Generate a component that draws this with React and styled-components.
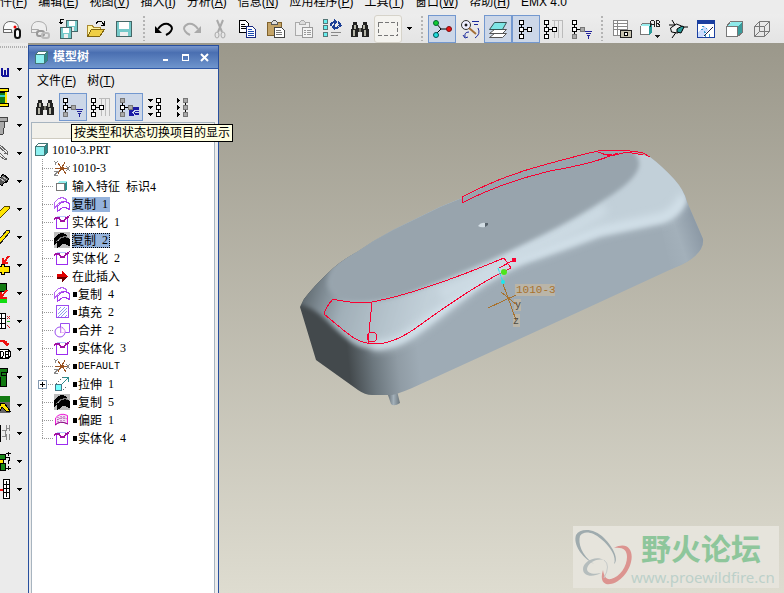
import { Fragment } from "react";
import styled, { createGlobalStyle, css } from "styled-components";

const GlobalStyle = createGlobalStyle`
    * {
        box-sizing: border-box;
    }

    body {
        margin: 0;
        overflow: hidden;
        background: #ececec;
        color: #000;
        font-family: "Liberation Sans", "Noto Sans CJK SC", sans-serif;
        font-size: 12px;
    }

    button {
        padding: 0;
        border: 0;
        background: none;
        color: inherit;
        font: inherit;
    }

    svg {
        display: block;
        flex: none;
    }
`;

const Page = styled.div`
    display: flex;
    flex-direction: column;
    height: 100vh;
    overflow: hidden;
`;

const MenuBar = styled.nav`
    display: flex;
    flex: none;
    align-items: flex-end;
    gap: 11px;
    height: 14px;
    padding-bottom: 4px;
    margin-left: -12px;
    overflow: hidden;
`;

const MenuItem = styled.button`
    flex: none;
    line-height: 16px;
    white-space: nowrap;
`;

const ToolBar = styled.div`
    display: flex;
    flex: none;
    align-items: center;
    height: 29px;
    margin-left: -2px;
    background: linear-gradient(#ededed, #e4e4e4);
`;

const ToolButton = styled.button`
    display: flex;
    flex: none;
    align-items: center;
    justify-content: center;
    width: 28px;
    height: 28px;

    ${(p) => p.$pressed && css`
        border: 1px solid #7398cf;
        background: #ccd7e8;
    `}

    ${(p) => p.$soft && css`
        border: 1px solid #d6d3ca;
        border-radius: 3px;
        background: #f4f3ef;
    `}
`;

const Grip = styled.span`
    flex: none;
    width: 12px;
    height: 25px;
    background: repeating-linear-gradient(#b4b4b4 0 2px, transparent 2px 4px) center / 2px 100% no-repeat;
`;

const DropButton = styled.button`
    display: flex;
    flex: none;
    align-items: center;
    justify-content: center;
    width: 14px;
    height: 28px;
`;

const Main = styled.main`
    display: flex;
    flex: 1;
    min-height: 0;
    background: #9b988b;
`;

const Dock = styled.aside`
    flex: none;
    width: 28px;
    padding-top: 12px;
    overflow: hidden;
    background: repeating-linear-gradient(90deg, #b0b0b0 0 1px, transparent 1px 2px) 0 3px / 100% 2px no-repeat #ebebeb;
`;

const DockRow = styled.div`
    display: flex;
    align-items: center;
    height: 28px;
    margin-left: -12px;
`;

const DockTool = styled.button`
    width: 24px;
    height: 24px;
`;

const Panel = styled.section`
    position: relative;
    display: flex;
    flex: none;
    flex-direction: column;
    width: 191px;
    margin-top: 2px;
    border: 1px solid #284f9e;
    border-bottom: 0;
    background: #ececec;
`;

const TitleBar = styled.header`
    display: flex;
    align-items: center;
    height: 23px;
    padding: 0 4px 0 5px;
    border-bottom: 1px solid #2f58a5;
    background: linear-gradient(#7896cc, #4a6fb1 30%, #6f95cd);
    color: #fff;
`;

const Title = styled.h1`
    flex: 1;
    margin: 0 0 0 4px;
    font-size: 12px;
    line-height: 20px;
`;

const WindowButton = styled.button`
    display: flex;
    align-items: center;
    justify-content: center;
    width: 19px;
    height: 19px;
`;

const PanelMenu = styled.nav`
    display: flex;
    gap: 11px;
    align-items: center;
    height: 23px;
    padding-left: 8px;
`;

const PanelTools = styled.div`
    display: flex;
    height: 30px;
    padding-left: 2px;
    padding-top: 1px;
`;

const TreeBox = styled.div`
    flex: 1;
    margin: 0 3px 0 2px;
    border: 1px solid #a7b4bf;
    border-bottom: 0;
    background: #fff;
`;

const TreeHead = styled.div`
    height: 16px;
    border-bottom: 1px solid #cfccc0;
    background: #f1f0ea;
`;

const Tree = styled.ul`
    margin: 0;
    padding: 2px 0 0;
    list-style: none;
`;

const Row = styled.li`
    display: flex;
    align-items: center;
    height: 18px;
    padding-left: ${(p) => (p.$root ? 2 : 10)}px;
`;

const Branch = styled.span`
    display: flex;
    align-items: center;
    width: 12px;
    height: 18px;
    background:
        repeating-linear-gradient(#999 0 1px, transparent 1px 2px) 0 0 / 1px ${(p) => (p.$last ? 10 : 18)}px no-repeat,
        repeating-linear-gradient(90deg, #999 0 1px, transparent 1px 2px) 0 9px / 100% 1px no-repeat;
`;

const Expander = styled.button`
    flex: none;
    width: 9px;
    height: 9px;
    margin-left: -4px;
    border: 1px solid #8399b1;
    background:
        linear-gradient(#000, #000) center / 5px 1px no-repeat,
        linear-gradient(#000, #000) center / 1px 5px no-repeat,
        #fff;
`;

const Label = styled.span`
    display: flex;
    align-items: center;
    height: 15px;
    margin-left: 2px;
    padding-right: 2px;
    white-space: pre;
    font-family: "Liberation Serif", "Noto Sans CJK SC", serif;

    ${(p) => p.$code && css`
        font-family: "Liberation Mono", monospace;
        font-size: 10px;
    `}

    ${(p) => p.$marked && css`
        &::before {
            content: "";
            width: 4px;
            height: 5px;
            margin: 0 1px;
            background: #000;
        }
    `}

    ${(p) => p.$selected && css`
        background: #95b3dc;
    `}

    ${(p) => p.$focused && css`
        outline: 1px dotted #000;
        outline-offset: -1px;
    `}
`;

const Count = styled.span`
    margin-left: 3px;
`;

const Tooltip = styled.div`
    position: absolute;
    top: 78px;
    left: 42px;
    z-index: 2;
    padding: 0 2px;
    border: 1px solid #000;
    background: #ffffe1;
    line-height: 16px;
    white-space: nowrap;
`;

const Canvas = styled.section`
    position: relative;
    flex: 1;
    overflow: hidden;
    background: linear-gradient(#9b988b, #dedcd0);
`;

const Watermark = styled.div`
    position: absolute;
    right: 5px;
    bottom: 5px;
    display: flex;
    align-items: center;
    width: 206px;
    height: 62px;
    background: #e6e4dc;
`;

const SiteText = styled.div`
    display: flex;
    flex-direction: column;
    margin-left: -2px;
`;

const SiteName = styled.strong`
    margin-left: 10px;
    color: #8ec69b;
    font-family: "Noto Sans CJK SC", sans-serif;
    font-size: 30px;
    font-weight: 700;
    line-height: 40px;
`;

const SiteUrl = styled.a`
    color: #bcd0c9;
    font-family: "Noto Sans", sans-serif;
    font-size: 15px;
    line-height: 20px;
    text-decoration: none;
`;

/* ---------- icons ---------- */

const Icon = ({ size = 20, smooth, children }) => (
    <svg
        width={size}
        height={size}
        viewBox={`0 0 ${size} ${size}`}
        fill="none"
        stroke="#000"
        shapeRendering={smooth ? "auto" : "crispEdges"}
        aria-hidden="true"
    >
        {children}
    </svg>
);

const Caret = () => (
    <svg width="5" height="3" viewBox="0 0 5 3" shapeRendering="crispEdges" aria-hidden="true">
        <path d="M0 0h5v1H0zM1 1h3v1H1zM2 2h1v1H2z" />
    </svg>
);

// square nodes joined by a line, shared by all of the tree icons
const Nodes = ({ x = 2, grey = [], side = true, line = "#000" }) => (
    <g>
        <path d={`M${x + 2.5} 3v14${side ? "M" + (x + 3) + " 10.5h8" : ""}`} stroke={line} />
        {[1, 8, 15].map((y, i) => (
            <rect
                key={y}
                x={x + 0.5}
                y={y + 0.5}
                width="4"
                height="4"
                fill={grey.includes(i) ? "#aaa" : "#fff"}
                stroke={grey.includes(i) ? "#777" : "#000"}
            />
        ))}
        {side && (
            <rect
                x={x + 8.5}
                y="8.5"
                width="4"
                height="4"
                fill={grey.includes(3) ? "#aaa" : "#fff"}
                stroke={grey.includes(3) ? "#777" : "#000"}
            />
        )}
    </g>
);

const Binoculars = () => (
    <Icon>
        <path d="M3 3h4v3h1v3h4V6h1V3h4v3h1v4h1v8h-7v-5H8v5H1v-8h1V6h1z" fill="#222" stroke="none" />
        <path d="M4 6h2v4H4zM3 11h2v6H3zM13 6h2v4h-2zM14 11h2v6h-2z" fill="#b5b5a8" stroke="none" />
        <path d="M9 9h2v4H9z" fill="#77776c" stroke="none" />
    </Icon>
);

const NodesFunnel = () => (
    <Icon>
        <g transform="translate(-2 0)"><Nodes grey={[2, 3]} /></g>
        <path d="M13 12.500h7M14 14.500h5M15 16.500h3M16.500 16v4" stroke="#22229a" />
    </Icon>
);

const NodesColumns = () => (
    <Icon>
        <path d="M8 1.500h11M10.500 2v17M14.500 2v17M18.500 2v17" stroke="#bbb" />
        <g transform="translate(-2 0)"><Nodes /></g>
    </Icon>
);

const NodesOnly = () => (
    <Icon><Nodes x={3} /></Icon>
);

const NodesLayer = () => (
    <Icon>
        <path d="M10 10h10v9H10z" fill="#1b1ba4" stroke="none" />
        <g transform="translate(-1 0)"><Nodes grey={[0, 2, 3]} /></g>
        <path d="M20 13.500h-4l-2 2 2 3h4M16 15.500h4" stroke="#cdd8ee" />
    </Icon>
);

const NodesExpand = () => (
    <Icon>
        <path d="M1 2h5v1H1zM2 3h3v1H2zM3 4h1v1H3zM1 9h5v1H1zM2 10h3v1H2zM3 11h1v1H3zM1 16h5v1H1zM2 17h3v1H2zM3 18h1v1H3z" fill="#000" stroke="none" />
        <Nodes x={9} side={false} />
    </Icon>
);

const NodesCollapse = () => (
    <Icon>
        <path d="M2 1v5l3-2.500zM2 8v5l3-2.500zM2 15v5l3-2.500z" fill="#000" stroke="none" />
        <Nodes x={8} grey={[0, 1, 2]} side={false} />
    </Icon>
);

const SessionA = () => (
    <Icon smooth>
        <path d="M1.500 13.500V8Q3 2 9 2.500Q16 3 16.500 9M1.500 10.500h8v3h-8M1.500 13.500h9" fill="#fafafa" stroke="#666" />
        <circle cx="13" cy="8" r="1.500" fill="#e00" stroke="none" />
        <rect x="13" y="10" width="5" height="9" rx="2.500" fill="#fff" stroke="#111" strokeWidth="2" />
    </Icon>
);

const SessionB = () => (
    <Icon smooth>
        <path d="M1.500 14V8Q3 2 9 2.500Q16 3 16.500 9v3M1.500 10.500h7v3h-7" fill="#eee" stroke="#aaa" />
        <rect x="7" y="12" width="7" height="5" rx="2" stroke="#999" strokeWidth="2" />
        <rect x="12" y="14" width="7" height="5" rx="2" stroke="#bbb" strokeWidth="2" />
    </Icon>
);

const Disk = ({ x = 0, y = 0, w = 14 }) => (
    <g transform={`translate(${x} ${y})`}>
        <path d={`M.5.5h${w}v${w}h-${w}z`} fill="#75c9c9" stroke="#466" />
        <path d={`M3 1h${w - 5}v${w / 2 - 1}H3z`} fill="#fff" stroke="none" />
        <path d={`M4 ${w - 4}h${w - 7}v4H4z`} fill="#eee" stroke="none" />
    </g>
);

const SaveAll = () => (
    <Icon>
        <Disk x={8} y={1} w={11} />
        <Disk x={2} y={8} w={11} />
        <path d="M6 .5H2.500V5M.5 3.500h4M1.500 4.500h2" />
    </Icon>
);

const OpenFolder = () => (
    <Icon>
        <path d="M1.500 17V6.500h5l1 2h7V11" fill="#fff3a0" stroke="#aa8a30" />
        <path d="M1.500 17.500l4-7h13l-5 7z" fill="#f0cf45" stroke="#806510" />
        <path d="M10 4.500q4-5 8 1M18.500 2v4h-4" />
    </Icon>
);

const Save = () => (
    <Icon><Disk x={2} y={2} w={15} /></Icon>
);

const Undo = () => (
    <Icon smooth>
        <path d="M4 10Q8 4 14 5Q20 8 17 12Q16 14 12 16" strokeWidth="2" />
        <path d="M1 7v7h7z" fill="#000" stroke="none" />
    </Icon>
);

const Redo = () => (
    <Icon smooth>
        <path d="M16 10Q12 4 6 5Q0 8 3 12Q4 14 8 16" stroke="#aaa" strokeWidth="2" />
        <path d="M19 7v7h-7z" fill="#aaa" stroke="none" />
    </Icon>
);

const Cut = () => (
    <Icon smooth>
        <path d="M7 1l5 12M13 1L8 13" stroke="#aaa" strokeWidth="2" />
        <ellipse cx="7" cy="16" rx="2" ry="3" stroke="#aaa" />
        <ellipse cx="13" cy="16" rx="2" ry="3" stroke="#aaa" />
    </Icon>
);

const Copy = () => (
    <Icon>
        <path d="M1.500 1.500h6l3 3v9h-9z" fill="#fff" />
        <path d="M3 5.500h4M3 7.500h6M3 9.500h5" />
        <path d="M8.500 7.500h6l3 3v8h-9z" fill="#fff" stroke="#1a2a80" />
        <path d="M10 10.500h4M10 12.500h6M10 14.500h6M10 16.500h6" stroke="#1a4ab0" />
    </Icon>
);

const Paste = () => (
    <Icon>
        <path d="M1.500 3.500h14v13h-14z" fill="#c4a468" stroke="#80622c" />
        <path d="M5.500 5.500v-2l2-2h2l2 2v2z" fill="#ddd" stroke="#555" />
        <path d="M8.500 8.500h7l3 3v7h-10z" fill="#fff" stroke="#444" />
        <path d="M10 11.500h5M10 13.500h6M10 15.500h6" stroke="#777" />
    </Icon>
);

const PasteSpecial = () => (
    <Icon>
        <path d="M1.500 3.500h14v13h-14z" fill="#eee" stroke="#aaa" />
        <path d="M5.500 5.500v-2l2-2h2l2 2v2z" fill="#ddd" stroke="#aaa" />
        <path d="M8.500 8.500h10v10h-10z" fill="#f4f4f4" stroke="#999" />
        <path d="M10 11.500h2M13 11.500h4M10 13.500h2M13 13.500h4M10 15.500h2M13 15.500h4" stroke="#999" />
    </Icon>
);

const Regenerate = () => (
    <Icon>
        {[1, 7, 14].map((y) => (
            <rect key={y} x="1.500" y={y - 0.5} width="4" height="4" fill="#6ee" stroke="#577" />
        ))}
        <path d="M9 7q0-4 4-4M16 3q3 1 2 4M12 8q2 2 4 0" stroke="#1c3f96" strokeWidth="2" />
        <path d="M12 0l4 3-4 3zM16 6h4l-2 3zM13 5v6l-4-3z" fill="#1c3f96" stroke="none" />
        <path d="M9 13.500h10M9 16.500h7" stroke="#888" />
    </Icon>
);

const SelectBox = () => (
    <Icon><path d="M.5 3.500h19v13H.5z" stroke="#777" strokeDasharray="4 2" /></Icon>
);

const SpinCenter = () => (
    <Icon smooth>
        <path d="M4 4l5 6L4 15M9 10h8" />
        <circle cx="4" cy="4" r="2.500" fill="#1c3" stroke="#063" />
        <circle cx="4" cy="16" r="2.500" fill="#2dd" stroke="#055" />
        <circle cx="17" cy="10" r="2.500" fill="#e11" stroke="#711" />
    </Icon>
);

const OrientMode = () => (
    <Icon smooth>
        <circle cx="6" cy="6" r="4.500" fill="#eef" stroke="#333" />
        <circle cx="6" cy="6" r="1" fill="#333" />
        <path d="M9 9l7 6" stroke="#a5703a" strokeWidth="2" />
        <path d="M12 2.500h7M14 5.500h4M9 13q-5 0-4 5M3 16l2 3 3-1M18 9q3 6-3 10" stroke="#1b2a9c" />
    </Icon>
);

const Layers = () => (
    <Icon smooth>
        <path d="M1.500 18.500l5-4h12l-4 4zM1.500 14.500l5-4h12l-4 4z" fill="#fff" stroke="#555" />
        <path d="M1.500 10.500l5-7h12l-4 7z" fill="#7ee6e6" stroke="#355" />
    </Icon>
);

const ViewSnapshot = () => (
    <Icon>
        <path d="M1.500 1.500h14v15h-14zM1 4.500h14M1 7.500h14M1 10.500h14M5.500 2v14" fill="#fff" stroke="#888" />
        <path d="M8.500 11.500h11v7h-11z" fill="#c8c4b0" stroke="#222" />
        <circle cx="14" cy="15" r="2" fill="#fff" />
    </Icon>
);

const SavedViews = () => (
    <Icon>
        <path d="M.5 7.500l2-3h9v9l-2 2h-9z" fill="#fff" stroke="#777" />
        <path d="M2 5h9l-2 2H1z" fill="#9ee" stroke="none" />
        <path d="M9 7l3-2v9l-3 2z" fill="#2a9a9a" stroke="none" />
        <path d="M10.500 8V2.500l1-1h2l1 1V8M11 5.500h3M16.500 8V1.500h2l1 1v1l-1 1h-2M18 4.500l1 1v2h-3" stroke="#222" />
        <path d="M15 16h5v1h-5zM16 17h3v1h-3zM17 18h1v1h-1z" fill="#222" stroke="none" />
    </Icon>
);

const Datum = () => (
    <Icon smooth>
        <path d="M4 1l3 5M1 6h8M14 8h6M4 19l5-7" />
        <path d="M2.500 9l6-4 5 2 1 4-5 3-6-1z" fill="#eee" />
        <path d="M9 10l5-3 2 1-3 6-4-1z" fill="#2a9a9a" />
    </Icon>
);

const Sketch = () => (
    <Icon>
        <path d="M1.500 1.500h17v17h-17z" fill="#fff" stroke="#1b3fa0" />
        <path d="M1 1h18v4H1z" fill="#1b3fa0" stroke="none" />
        <path d="M2 14l6-7 4 4-5 7H2z" fill="#cdf" stroke="none" />
        <path d="M6 7q8 3 8 11M5 10q5 2 5 8" stroke="#39c" strokeDasharray="2 2" />
        <path d="M17 8l-9 9" stroke="#224" />
    </Icon>
);

const Shaded = () => (
    <Icon>
        <path d="M2.500 7.500h11v10h-11z" fill="#fff" stroke="#777" />
        <path d="M3 7l4-4h11l-4 4z" fill="#8eeaea" stroke="none" />
        <path d="M14 7l4-4v10l-4 4z" fill="#3a9c9c" stroke="none" />
        <path d="M2.500 7.500l4-5h12v11l-5 4" stroke="#777" />
    </Icon>
);

const Wireframe = () => (
    <Icon smooth>
        <path d="M2.500 7.500h10v10h-10zM7.500 2.500h10v10h-10zM2.500 7.500l5-5M12.500 7.500l5-5M12.500 17.500l5-5M2.500 17.500l5-5" stroke="#777" />
    </Icon>
);

/* dock icons: 24px wide, the left half is hidden behind the window edge */

const dockIcons = [
    <g key="w" stroke="#12129a" strokeWidth="2">
        <path d="M7 12h5M7 16h5M7 20h5M14 11v8M17 13v6M20 11v8M14 19h7" />
    </g>,
    <g key="spool">
        <path d="M2 3.500h18v3H2zM2 18.500h18v3H2z" fill="#ffe800" />
        <path d="M2 7h15v11H2z" fill="#127a12" />
        <path d="M2 11h15" stroke="#3cc" strokeWidth="2" />
        <path d="M18 7v11" stroke="#ffe800" strokeWidth="2" />
    </g>,
    <path key="bin" d="M2 4.500h17v4H2zM5 8.500h12l-2 13H5z" fill="#aaa" stroke="#444" />,
    <path key="clip" d="M8 3l11 10M8 8l11 11M12 4l7 6v3l-3-1M7 11l10 8 2-2" stroke="#666" />,
    <g key="screw">
        <path d="M8 20l2-8 5-7 6 5-3 4-1-2-3 5-2-2-2 5z" fill="#555" />
        <path d="M12 9l5 4M14 7l5 4" stroke="#bbb" />
    </g>,
    <path key="chalk" d="M9 17l8-8h4v3l-8 8H9z" fill="#ffe400" stroke="#554400" />,
    <path key="pen" d="M8 18L19 5h2v3L11 20H8z" fill="#ffe400" stroke="#222" />,
    <g key="mate">
        <path d="M6 13.500h7v-2h3v2h5v6h-5v2h-3v-2H6z" fill="#ffe400" />
        <path d="M21 3l-5 6M15 5v5h5" stroke="#e11" strokeWidth="2" />
    </g>,
    <g key="die">
        <path d="M3 2.500h15v8H3z" fill="#127a12" />
        <path d="M19 9l-6 7M13 11v6h6" stroke="#e11" strokeWidth="2" />
        <path d="M3 20h16" stroke="#1d1" strokeWidth="4" />
    </g>,
    <g key="grid">
        <path d="M4 4.500h13v15H4zM4 9.500h13M4 14.500h13M8.500 4v15M13.500 4v15" fill="#fff" />
        <path d="M19 7l3 3M22 7l-3 3M19 16l3 3" stroke="#c22" />
        <path d="M19 12.500h3" stroke="#2a2" />
    </g>,
    <g key="db">
        <path d="M11 4q8-2 8 3M16 6l3 3 2-3z" fill="#e11" stroke="#e11" />
        <path d="M5 12.500h15l2 2v5l-2 2H5z" fill="#fff" />
        <path d="M12.500 14v6h2l1-2v-2l-1-2zM17.500 14v6h3v-6zM17 17.500h3" />
    </g>,
    <path key="block" d="M3 3.500h16v4h-1v14h-6v-9H3zM13 7.500h5v3h-5z" fill="#127a12" />,
    <g key="bend">
        <path d="M3 3h19v17H3z" fill="#666" stroke="none" />
        <path d="M3 3h19v6H3z" fill="#127a12" stroke="none" />
        <path d="M10 18l3-8 4 1 5 7h-4l-4-4-3 6z" fill="#ffe400" />
    </g>,
    <g key="plate">
        <path d="M4 4.500h8v16H4z" fill="#ffe400" />
        <path d="M14 9.500h3v6h-3M18.500 4v6M21.500 4v6M18 7.500h4M18.500 13v6M21.500 13v6" stroke="#888" />
    </g>,
    <g key="part">
        <path d="M10 5h7v5h-7zM12 14h5v7h-5z" fill="#1a8a1a" />
        <path d="M8 10h7v4H8z" fill="#ffe400" />
        <path d="M18 9q4-2 4 1l-2 3v2M18 4.500h5M20.500 3v4M18 19.500h5M20.500 17v4" />
    </g>,
    <g key="list">
        <path d="M15.500 2.500h6v19h-6zM15 7.500h6M15 11.500h6M15 15.500h6M18.500 4v16" fill="#fff" />
        <path d="M12 13h3" stroke="#e11" strokeWidth="2" />
    </g>,
];

/* tree icons, 16px */

const Cube = ({ size = 16, fill = "#8ef0f0" }) => (
    <Icon size={size}>
        <path d="M1.500 4.500h9v9h-9z" fill={fill} stroke="#477" />
        <path d="M2 4l2-2h9v9l-2 2V4z" fill="#fff" stroke="none" />
        <path d="M10.500 4.500l3-3v9l-3 3z" fill="#2b8c8c" stroke="#477" />
        <path d="M1.500 4.500l3-3h9" stroke="#477" />
    </Icon>
);

const SmallCube = () => (
    <Icon size={16}>
        <path d="M2.500 5.500h8v7h-8z" fill="#fff" stroke="#777" />
        <path d="M3 5l2-2h8l-2 2z" fill="#9ee" stroke="none" />
        <path d="M11 5l2-2v8l-2 2z" fill="#2b8c8c" stroke="none" />
    </Icon>
);

const Csys = () => (
    <Icon size={16}>
        <path d="M1 8.500h12M4 3l8 11M11 2L4 14" stroke="#9a5322" />
        <path d="M6 7h4v3H6z" fill="#9a5322" stroke="none" />
        <path d="M0 1l2 2 2-2M2 3l-1 2M12 6l4 5M16 6l-4 5M0 11.500h4l-4 4h4" stroke="#888" />
    </Icon>
);

const Quilt = ({ dark }) => (
    <Icon size={16}>
        {dark && <path d="M0 0h16v16H0z" fill="#bdbdbd" stroke="none" />}
        <path
            d="M.5 12.500V6.500L4.500 2.500L8.500 1.500L12.500 3.500V7L8.500 5.500L4.500 7.500Z"
            fill={dark ? "#000" : "#fff"}
            stroke={dark ? "#000" : "#b565f0"}
        />
        <path
            d="M3.500 15.500V10.500L7.500 6.500L11.500 5.500L15.500 7.500V13.500L11.500 11.500L8.500 11.500Z"
            fill={dark ? "#000" : "#fff"}
            stroke={dark ? "#000" : "#a53cf0"}
        />
        {dark && <path d="M2 10L6.500 6L11 4.500L14 5.500" stroke="#777" />}
    </Icon>
);

const Solidify = () => (
    <Icon size={16}>
        <path d="M2.500 5v9.500h11V4" stroke="#9b2df0" />
        <path d="M3 2.500h9" stroke="#b8c8ff" />
        <path d="M0 4.500l2-1h3l2 3h3l2-3 4-2" stroke="#a010a0" />
        <path d="M0 5.500l2-1h3l2 3h3l2-3 3-1" stroke="#a010a0" />
    </Icon>
);

const InsertArrow = () => (
    <Icon size={16}>
        <path d="M3 6h5V3l6 5.500L8 14v-4H3z" fill="#e00000" stroke="none" />
        <path d="M3 9h11l-6 5v-3H3z" fill="#6e0000" stroke="none" />
    </Icon>
);

const Fill = () => (
    <Icon size={16}>
        <path d="M2.500 1.500h12v12h-12z" fill="#fff" stroke="#9b4df0" />
        <path d="M4 6l3-3M4 10l7-7M4 13l9-9M7 13l6-6M11 13l2-2" stroke="#8ca0ee" />
    </Icon>
);

const Merge = () => (
    <Icon size={16} smooth>
        <path d="M6.500 1.500h9v9h-9z" stroke="#9b4df0" />
        <circle cx="6" cy="10" r="5" stroke="#9b4df0" />
        <path d="M7 5.500q4 1 4 5H7z" fill="#fff" stroke="#eebbf6" />
    </Icon>
);

const Extrude = () => (
    <Icon size={16}>
        <path d="M1.500 8.500h6v6h-6z" fill="#7ff" stroke="#478" />
        <path d="M2 8l7-7M9 14l5-6" stroke="#666" strokeDasharray="1 2" />
        <path d="M8 8l6-6M9 1.500h5.500V6" stroke="#2b8c8c" />
    </Icon>
);

const Offset = () => (
    <Icon size={16} smooth>
        <path d="M1.500 13V6Q6 0 13.500 3.500V12Q6 8 1.500 13Z" fill="#f7dff7" stroke="#f01cd8" />
        <path d="M4 5v6M7 4v6M10 4v6M3 8q5-4 10-1" stroke="#a0409a" strokeDasharray="1 1" />
        <path d="M1 13Q6 8 14 12" stroke="#802080" />
    </Icon>
);

const treeRows = [
    { icon: <Csys />, text: "1010-3" },
    { icon: <SmallCube />, text: "输入特征", count: "标识4" },
    { icon: <Quilt />, text: "复制", count: "1", selected: true },
    { icon: <Solidify />, text: "实体化", count: "1" },
    { icon: <Quilt dark />, text: "复制", count: "2", selected: true, focused: true },
    { icon: <Solidify />, text: "实体化", count: "2" },
    { icon: <InsertArrow />, text: "在此插入" },
    { icon: <Quilt />, text: "复制", count: "4", marked: true },
    { icon: <Fill />, text: "填充", count: "2", marked: true },
    { icon: <Merge />, text: "合并", count: "2", marked: true },
    { icon: <Solidify />, text: "实体化", count: "3", marked: true },
    { icon: <Csys />, text: "DEFAULT", marked: true, code: true },
    { icon: <Extrude />, text: "拉伸", count: "1", marked: true, closed: true },
    { icon: <Quilt dark />, text: "复制", count: "5", marked: true },
    { icon: <Offset />, text: "偏距", count: "1", marked: true },
    { icon: <Solidify />, text: "实体化", count: "4", marked: true },
];

const menus = [
    ["文件", "F"], ["编辑", "E"], ["视图", "V"], ["插入", "I"], ["分析", "A"], ["信息", "N"],
    ["应用程序", "P"], ["工具", "T"], ["窗口", "W"], ["帮助", "H"],
];

const toolGroups = [
    [
        ["session", <SessionA />], ["session link", <SessionB />], ["save a copy", <SaveAll />],
        ["open", <OpenFolder />], ["save", <Save />],
    ],
    [
        ["undo", <Undo />], ["redo", <Redo />], ["cut", <Cut />], ["copy", <Copy />], ["paste", <Paste />],
        ["paste special", <PasteSpecial />], ["regenerate", <Regenerate />], ["find", <Binoculars />],
        ["select", <SelectBox />, "soft"],
    ],
    [
        ["spin center", <SpinCenter />, "pressed"], ["orient mode", <OrientMode />],
        ["layers", <Layers />, "pressed"], ["model tree", <NodesOnly />, "pressed"],
        ["tree columns", <NodesColumns />], ["tree filters", <NodesFunnel />],
    ],
    [
        ["view manager", <ViewSnapshot />], ["saved views", <SavedViews />], ["datum", <Datum />],
        ["sketch", <Sketch />], ["shaded", <Shaded />], ["wireframe", <Wireframe />],
    ],
];

const Model = () => (
    <svg width="565" height="550" viewBox="219 43 565 550" fill="none" aria-hidden="true">
        <defs>
            <linearGradient id="side" gradientUnits="userSpaceOnUse" x1="348" y1="360" x2="418" y2="352">
                <stop offset="0" stopColor="#43494c" />
                <stop offset="0.35" stopColor="#6c777e" />
                <stop offset="0.7" stopColor="#909ca5" />
                <stop offset="1" stopColor="#9eabb5" />
            </linearGradient>
            <linearGradient id="corner" gradientUnits="userSpaceOnUse" x1="660" y1="240" x2="704" y2="225">
                <stop offset="0" stopColor="#9eabb5" />
                <stop offset="0.4" stopColor="#a3b0ba" />
                <stop offset="1" stopColor="#8693a0" />
            </linearGradient>
            <linearGradient id="band" gradientUnits="userSpaceOnUse" x1="303" y1="290" x2="420" y2="325">
                <stop offset="0" stopColor="#5d676d" />
                <stop offset="0.15" stopColor="#7c8890" />
                <stop offset="0.35" stopColor="#a1afb8" />
                <stop offset="0.7" stopColor="#b4c2cb" />
                <stop offset="1" stopColor="#c2d0d9" />
            </linearGradient>
            <linearGradient id="pin" x1="0" x2="1" y1="0" y2="0">
                <stop offset="0" stopColor="#5c666d" />
                <stop offset="0.5" stopColor="#a3b0b9" />
                <stop offset="1" stopColor="#69747b" />
            </linearGradient>
            <clipPath id="body">
                <path d="M300 307L304 299Q314 286 328 273Q340 261 357 252Q374 240 393 230L440 207L462 198Q500 177 540 166T598 151Q625 148 650 157Q662 166 674 179Q684 190 687 202L703 239Q704 248 695 256Q687 263 676 267L585 309L423 383Q402 393 392 395H372Q365 395 358 390L316 360Z" />
            </clipPath>
            <filter id="soft" x="-10%" y="-10%" width="120%" height="120%">
                <feGaussianBlur stdDeviation="2" />
            </filter>
            <filter id="softer" x="-10%" y="-10%" width="120%" height="120%">
                <feGaussianBlur stdDeviation="4" />
            </filter>
        </defs>

        <path d="M387 392l4 12q3 3 9-1l-3-12z" fill="url(#pin)" />

        <g clipPath="url(#body)">
            <path d="M290 140H710V400H290z" fill="url(#side)" />
            <path d="M655 200L710 180V290L672 275z" fill="url(#corner)" />
            <path
                d="M295 303Q312 306 326 320T352 343Q366 352 386 348Q402 346 420 332T470 294T530 261T600 236L662 223Q682 216 687 198L690 140H440L295 240Z"
                fill="url(#band)"
                filter="url(#soft)"
            />
            <path
                d="M372 346Q392 347 412 333T465 293T525 258T600 231L662 218Q678 212 684 196"
                stroke="#d6e4ed"
                strokeWidth="8"
                filter="url(#softer)"
            />
            <path d="M440 294Q480 280 520 252Q580 226 605 208" stroke="#cddbe4" strokeWidth="12" filter="url(#softer)" />
            <path
                d="M327 284Q327 276 334 265L357 245L440 200L462 190L560 150L627 147Q641 156 639 166Q636 180 607 198Q575 219 540 236L503 254Q440 283 400 296Q376 303 350 301Q329 297 327 284Z"
                fill="#98a4ad"
                filter="url(#soft)"
            />
        </g>

        <path d="M478 226q3-4 7-3v4q-4 1-7-1z" fill="#d2dde4" />
        <path d="M485 223h3v2l-3 2z" fill="#56616a" />

        <g stroke="#fa0032" shapeRendering="crispEdges">
            <path d="M333 299Q352 304 372 302Q420 293 504 258L511 268Q478 283 420 325C400 340 386 344 375 344C355 343 350 335 324 314Q325 308 333 299ZM372 302L368 343" />
            <circle cx="372" cy="337" r="5" />
            <path d="M462 203V197Q500 177 540 166T598 151Q625 149 643 153L650 157M462 203Q500 183 550 171Q590 164 610 156Q620 154 627 152L643 155M598 152L610 156L618 153M603 154H612M499 268L512 261" />
            <circle cx="514" cy="260" r="2" fill="#fa0032" />
        </g>

        <path d="M498 268l5 14" stroke="#1ce8ee" strokeDasharray="4 1" />
        <circle cx="504" cy="272" r="3" fill="#4ce61c" />
        <circle cx="503" cy="282" r="2" fill="#1ce8ee" />
        <path d="M515 284h40v12h-40zM514 299h7v12h-7zM513 314h7v13h-7z" fill="#bab5a8" />
        <path d="M503 284l13 36M488 308l28-13M501 292l16 13" stroke="#a8722e" shapeRendering="crispEdges" />
        <text x="516" y="293" fill="#a8722e" fontFamily="Liberation Mono" fontSize="11">1010-3</text>
        <text x="515" y="308" fill="#4e4a40" fontFamily="Liberation Mono" fontSize="10">y</text>
        <text x="513" y="324" fill="#4e4a40" fontFamily="Liberation Mono" fontSize="10">z</text>
    </svg>
);

const WatermarkLogo = () => (
    <svg width="60" height="62" viewBox="0 0 60 62" aria-hidden="true">
        <path fillRule="evenodd" fill="#9fabae" d="M3 9C7 2 21 2 31 12C41 22 46 34 41 38C44 31 37 20 28 13C19 5 10 5 7 10C5 17 8 29 21 38C8 31 0 18 3 9Z" />
        <path fill="#dc9490" d="M41 22C54 15 61 24 58 36C55 49 43 60 33 58C28 56 28 50 30 44C31 50 33 54 38 53C47 51 54 40 54 31C54 24 50 21 41 22Z" />
        <path fill="#b5bdbd" d="M31 34C22 29 10 36 10 43C10 50 19 52 28 47C20 49 14 47 14 43C15 37 23 32 31 34Z" />
        <path d="M31 34Q38 39 31 52" fill="none" stroke="#c7cbca" />
    </svg>
);

function ModelTree() {
    return (
        <Panel>
            <TitleBar>
                <Cube size={15} />
                <Title>模型树</Title>
                <WindowButton aria-label="minimize">
                    <Icon size={9}><path d="M1 7h5" stroke="#fff" strokeWidth="2" /></Icon>
                </WindowButton>
                <WindowButton aria-label="maximize">
                    <Icon size={9}><path d="M1.500 1.500h6v6h-6zM1 2.500h7" stroke="#fff" /></Icon>
                </WindowButton>
                <WindowButton aria-label="close">
                    <Icon size={9} smooth><path d="M1 1l7 7M8 1L1 8" stroke="#fff" strokeWidth="2" /></Icon>
                </WindowButton>
            </TitleBar>
            <PanelMenu>
                <MenuItem>文件(<u>F</u>)</MenuItem>
                <MenuItem>树(<u>T</u>)</MenuItem>
            </PanelMenu>
            <PanelTools>
                <ToolButton aria-label="find"><Binoculars /></ToolButton>
                <ToolButton aria-label="item display" $pressed><NodesFunnel /></ToolButton>
                <ToolButton aria-label="columns"><NodesColumns /></ToolButton>
                <ToolButton aria-label="layer tree" $pressed><NodesLayer /></ToolButton>
                <ToolButton aria-label="expand all"><NodesExpand /></ToolButton>
                <ToolButton aria-label="collapse all"><NodesCollapse /></ToolButton>
            </PanelTools>
            <TreeBox>
                <TreeHead />
                <Tree>
                    <Row $root>
                        <Cube />
                        <Label>1010-3.PRT</Label>
                    </Row>
                    {treeRows.map((row, i) => (
                        <Row key={i}>
                            <Branch $last={i === treeRows.length - 1}>
                                {row.closed && <Expander aria-label="expand" />}
                            </Branch>
                            {row.icon}
                            <Label
                                $marked={row.marked}
                                $selected={row.selected}
                                $focused={row.focused}
                                $code={row.code}
                            >
                                {row.text}
                                {row.count && <> <Count>{row.count}</Count></>}
                            </Label>
                        </Row>
                    ))}
                </Tree>
            </TreeBox>
            <Tooltip role="tooltip">按类型和状态切换项目的显示</Tooltip>
        </Panel>
    );
}

function App() {
    return (
        <Page>
            <GlobalStyle />
            <MenuBar>
                {menus.map(([name, letter]) => (
                    <MenuItem key={name}>{name}(<u>{letter}</u>)</MenuItem>
                ))}
                <MenuItem>EMX 4.0</MenuItem>
            </MenuBar>
            <ToolBar>
                {toolGroups.map((group, g) => (
                    <Fragment key={g}>
                        {g > 0 && <Grip />}
                        {group.map(([name, icon, look]) => (
                            <ToolButton
                                key={name}
                                aria-label={name}
                                $pressed={look === "pressed"}
                                $soft={look === "soft"}
                            >
                                {icon}
                            </ToolButton>
                        ))}
                        {g === 1 && <DropButton aria-label="select options"><Caret /></DropButton>}
                    </Fragment>
                ))}
            </ToolBar>
            <Main>
                <Dock>
                    {dockIcons.map((drawing, i) => (
                        <DockRow key={i}>
                            <DockTool aria-label={`tool ${i + 1}`}>
                                <Icon size={24}>{drawing}</Icon>
                            </DockTool>
                            <DropButton aria-label={`tool ${i + 1} options`}><Caret /></DropButton>
                        </DockRow>
                    ))}
                </Dock>
                <ModelTree />
                <Canvas>
                    <Model />
                    <Watermark>
                        <WatermarkLogo />
                        <SiteText>
                            <SiteName>野火论坛</SiteName>
                            <SiteUrl href="#">www.proewildfire.cn</SiteUrl>
                        </SiteText>
                    </Watermark>
                </Canvas>
            </Main>
        </Page>
    );
}

export default App;
